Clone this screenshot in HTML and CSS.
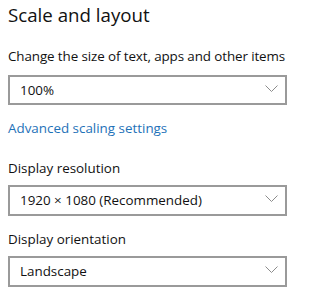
FILE: index.html
```html
<!DOCTYPE html>
<html>
<head>
<meta charset="utf-8">
<link rel="stylesheet" href="styles.css">
</head>
<body>
<div class="page">
  <h1 class="title">Scale and layout</h1>
  <div class="field first">
    <div class="label">Change the size of text, apps and other items</div>
    <div class="select"><span>100%</span>
      <svg class="chev" width="13" height="7" viewBox="0 0 13 7"><path d="M0.5 0.5 L6.5 6.5 L12.5 0.5" fill="none" stroke="#8c8c8c" stroke-width="1"/></svg>
    </div>
  </div>
  <a class="link">Advanced scaling settings</a>
  <div class="field second">
    <div class="label">Display resolution</div>
    <div class="select"><span>1920 × 1080 (Recommended)</span>
      <svg class="chev" width="13" height="7" viewBox="0 0 13 7"><path d="M0.5 0.5 L6.5 6.5 L12.5 0.5" fill="none" stroke="#8c8c8c" stroke-width="1"/></svg>
    </div>
  </div>
  <div class="field third">
    <div class="label">Display orientation</div>
    <div class="select"><span>Landscape</span>
      <svg class="chev" width="13" height="7" viewBox="0 0 13 7"><path d="M0.5 0.5 L6.5 6.5 L12.5 0.5" fill="none" stroke="#8c8c8c" stroke-width="1"/></svg>
    </div>
  </div>
</div>
</body>
</html>
```
FILE: styles.css
```css
html, body { margin: 0; padding: 0; background: #fff; }
body { font-family: "Open Sans", "Noto Sans", sans-serif; color: #111; }
.page { padding: 0 0 0 8px; width: 279px; }
.title { font-size: 18.7px; font-weight: 400; margin: 0; line-height: 28px; padding-top: 0.5px; }
.field { display: flex; flex-direction: column; }
.label { font-size: 13.4px; line-height: 20px; white-space: nowrap; }
.field.first .label { letter-spacing: -0.1px; }
.select { box-sizing: border-box; height: 30px; border: 2px solid #9a9a9a; display: flex; align-items: center; justify-content: space-between; padding: 0 7px 0 10px; font-size: 13.4px; }
.chev { display: block; margin-top: -3px; }
.field.first { margin-top: 17px; }
.field.first .select { margin-top: 9px; }
.link { display: block; color: #1e72b8; font-size: 13.4px; line-height: 20px; margin-top: 13px; }
.field.second { margin-top: 20px; }
.field.second .select { margin-top: 7px; height: 31px; }
.field.third { margin-top: 13px; }
.field.third .select { margin-top: 7px; height: 31px; }
```
